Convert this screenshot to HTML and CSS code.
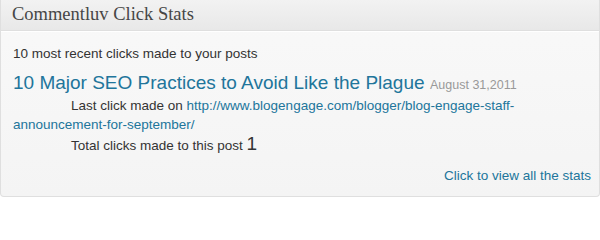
FILE: index.html
```html
<!DOCTYPE html>
<html>
<head>
<meta charset="utf-8">
<link rel="stylesheet" href="styles.css">
</head>
<body>
<div class="widget">
  <div class="widget-head">
    <h3 class="widget-title">Commentluv Click Stats</h3>
  </div>
  <div class="widget-body">
    <p class="intro">10 most recent clicks made to your posts</p>
    <div class="post">
      <a class="post-title" href="#">10 Major SEO Practices to Avoid Like the Plague</a> <span class="post-date">August 31,2011</span>
    </div>
    <p class="last-click">Last click made on <a href="#">http://www.blogengage.com/blogger/blog-engage-staff-announcement-for-september/</a></p>
    <p class="total">Total clicks made to this post <span class="count">1</span></p>
    <div class="footer-link"><a href="#">Click to view all the stats</a></div>
  </div>
</div>
</body>
</html>
```

FILE: styles.css
```css
html, body {
  margin: 0;
  padding: 0;
  background: #ffffff;
}
body {
  width: 600px;
  height: 200px;
  overflow: hidden;
  font-family: "Liberation Sans", Arial, sans-serif;
  color: #333333;
}
.widget {
  width: 598px;
  height: 196px;
  border: 1px solid #dfdfdf;
  border-top: none;
  border-radius: 0 0 4px 4px;
  background: linear-gradient(#f9f9f9, #f4f4f4);
  box-sizing: content-box;
  display: flex;
  flex-direction: column;
}
.widget-head {
  height: 30px;
  background: linear-gradient(#f2f2f2, #e8e8e8);
  border-bottom: 1px solid #dfdfdf;
  box-shadow: 0 1px 0 #ffffff;
  display: flex;
  align-items: center;
  padding-left: 11px;
}
.widget-title {
  margin: 0;
  font-family: "Liberation Serif", "Times New Roman", serif;
  font-weight: normal;
  font-size: 18.5px;
  color: #464646;
  line-height: 20px;
  position: relative;
  top: -1px;
}
.widget-body {
  flex: 1;
  padding: 13px 8px 0 12px;
  display: flex;
  flex-direction: column;
}
.intro {
  margin: 0;
  font-size: 13.5px;
  line-height: 19px;
}
.post {
  margin-top: 9px;
  line-height: 22px;
}
.post-title {
  font-size: 19px;
  color: #21759b;
  text-decoration: none;
}
.post-date {
  font-size: 12.5px;
  color: #999999;
  margin-left: 1px;
}
.last-click {
  margin: 0;
  font-size: 13.5px;
  line-height: 19px;
  text-indent: 58px;
}
.last-click a {
  color: #21759b;
  text-decoration: none;
}
.total {
  margin: 0;
  font-size: 13.5px;
  line-height: 20px;
  text-indent: 58px;
}
.count {
  font-size: 19px;
}
.footer-link {
  margin-top: 12px;
  text-align: right;
  font-size: 13.5px;
}
.footer-link a {
  color: #21759b;
  text-decoration: none;
}
```
